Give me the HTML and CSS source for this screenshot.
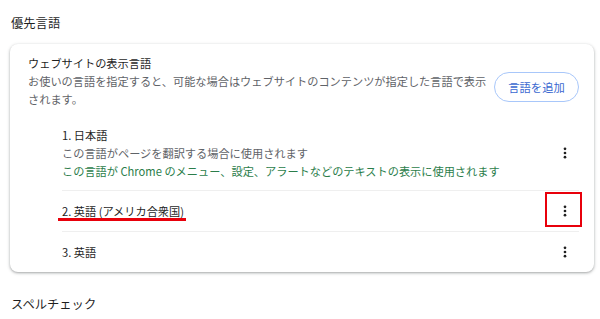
FILE: index.html
```html
<!DOCTYPE html>
<html lang="ja">
<head>
    <meta charset="UTF-8">
    <meta name="viewport" content="width=device-width, initial-scale=1.0">
    <title>言語</title>
    <link rel="stylesheet" href="styles.css">
</head>
<body>

    <h2 class="section-title">優先言語</h2>

    <div class="card">
        <div class="card-header">
            <div class="header-text">
                <div class="label">ウェブサイトの表示言語</div>
                <div class="secondary">お使いの言語を指定すると、可能な場合はウェブサイトのコンテンツが指定した言語で表示されます。</div>
            </div>
            <button class="add-btn">言語を追加</button>
        </div>

        <div class="lang-list">
            <div class="lang-item">
                <div class="lang-text">
                    <div>1. 日本語</div>
                    <div class="secondary">この言語がページを翻訳する場合に使用されます</div>
                    <div class="ui-note">この言語が Chrome のメニュー、設定、アラートなどのテキストの表示に使用されます</div>
                </div>
                <button class="more-btn" aria-label="その他の操作">
                    <svg width="16" height="16" viewBox="0 0 16 16"><circle cx="8" cy="3.8" r="1.35"/><circle cx="8" cy="8" r="1.35"/><circle cx="8" cy="12.2" r="1.35"/></svg>
                </button>
            </div>
            <div class="lang-item">
                <div class="lang-text">
                    <span class="marked-text">2. 英語 (アメリカ合衆国)</span>
                </div>
                <button class="more-btn marked" aria-label="その他の操作">
                    <svg width="16" height="16" viewBox="0 0 16 16"><circle cx="8" cy="3.8" r="1.35"/><circle cx="8" cy="8" r="1.35"/><circle cx="8" cy="12.2" r="1.35"/></svg>
                </button>
            </div>
            <div class="lang-item">
                <div class="lang-text">
                    <div>3. 英語</div>
                </div>
                <button class="more-btn" aria-label="その他の操作">
                    <svg width="16" height="16" viewBox="0 0 16 16"><circle cx="8" cy="3.8" r="1.35"/><circle cx="8" cy="8" r="1.35"/><circle cx="8" cy="12.2" r="1.35"/></svg>
                </button>
            </div>
        </div>
    </div>

    <h2 class="section-title spell">スペルチェック</h2>

</body>
</html>
```

FILE: styles.css
```css
html, body {
    margin: 0;
}

body {
    font-family: 'Noto Sans CJK JP', 'Noto Sans', sans-serif;
    font-size: 11.2px;
    line-height: 18px;
    color: #1f1f1f;
    background-color: #fff;
    padding-top: 14px;
}

.section-title {
    margin: 0 0 0 11px;
    font-size: 12.3px;
    font-weight: normal;
    line-height: 18px;
    color: #1f1f1f;
}

.section-title.spell {
    margin-top: 23px;
}

.card {
    margin: 12px 6px 0 10px;
    border-radius: 8px;
    background-color: #fff;
    box-shadow: 0 1px 2px rgba(60, 64, 67, 0.3), 0 1px 3px 1px rgba(60, 64, 67, 0.15);
}

.card-header {
    display: flex;
    align-items: flex-start;
    gap: 2px;
    padding: 10px 15px 0 18px;
}

.header-text {
    flex: 1;
}

.secondary {
    color: #5f6368;
}

.ui-note {
    color: #2b7d4a;
}

.add-btn {
    flex-shrink: 0;
    margin-top: 18px;
    width: 85px;
    height: 30px;
    border: 1px solid #a8c7fa;
    border-radius: 15px;
    background-color: #fff;
    color: #3a68d0;
    font-family: inherit;
    font-size: 11.3px;
    padding: 0;
    cursor: pointer;
}

.lang-list {
    padding: 7px 15px 0 52px;
}

.lang-item {
    display: flex;
    align-items: center;
    padding: 11px 0;
}

.lang-item:first-child {
    padding-bottom: 10px;
}

.lang-item + .lang-item {
    border-top: 1px solid #efefef;
}

.lang-text {
    flex: 1;
}

.marked-text {
    position: relative;
    display: inline-block;
}

.marked-text::after {
    content: '';
    position: absolute;
    left: -4px;
    right: -2px;
    bottom: -1px;
    height: 3px;
    background-color: #e8000b;
}

.more-btn {
    position: relative;
    width: 28px;
    height: 28px;
    margin: -5px 0;
    padding: 0;
    border: none;
    background: none;
    display: flex;
    align-items: center;
    justify-content: center;
    cursor: pointer;
}

.more-btn svg {
    fill: #1f1f1f;
}

.marked::after {
    content: '';
    position: absolute;
    left: -6px;
    right: -3px;
    top: -5px;
    bottom: -2px;
    border: 2px solid #e8000b;
}
```
